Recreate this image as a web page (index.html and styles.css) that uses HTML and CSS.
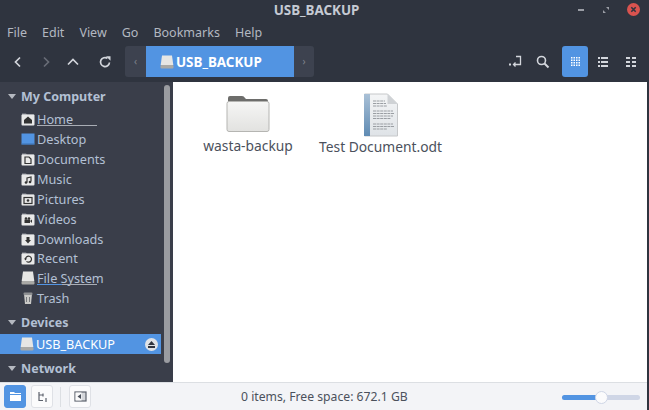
FILE: index.html
```html
<!DOCTYPE html>
<html>
    <head>
        <title>USB_BACKUP</title>
        <link rel="stylesheet" href="styles.css">
    </head>

    <body>
        <svg class="defs" width="0" height="0">
            <defs>
                <linearGradient id="folderFill" x1="0" y1="0" x2="0" y2="1">
                    <stop offset="0" stop-color="#f6f6f5"/>
                    <stop offset="1" stop-color="#e2e2e0"/>
                </linearGradient>
                <linearGradient id="spineFill" x1="0" y1="0" x2="0" y2="1">
                    <stop offset="0" stop-color="#a9c0d6"/>
                    <stop offset="1" stop-color="#5f8bb3"/>
                </linearGradient>
                <linearGradient id="pageFill" x1="0" y1="0" x2="0" y2="1">
                    <stop offset="0" stop-color="#f4f5f6"/>
                    <stop offset="1" stop-color="#dfe3e7"/>
                </linearGradient>
            </defs>
            <symbol id="place" viewBox="0 0 14 14">
                <path d="M1 3V1.500h4l1 1h7V4H1z" fill="#8f929a"/>
                <rect x=".5" y="2.500" width="13" height="11" rx="1" fill="#e9e9e9"/>
            </symbol>
            <symbol id="drive" viewBox="0 0 14 14">
                <path d="M2 .5h10l1.300 9.500H.7z" fill="#e6e6e4"/>
                <rect x=".5" y="10" width="13" height="3.500" rx="1" fill="#a9a9a6"/>
            </symbol>
        </svg>

        <!-- title bar -->
        <header class="titlebar">
            <span class="title">USB_BACKUP</span>
            <div class="winbtns">
                <svg width="8" height="8" viewBox="0 0 8 8"><rect x="1" y="3" width="6" height="2" fill="#9a9da5"/></svg>
                <svg width="8" height="8" viewBox="0 0 8 8"><path d="M4 1h3v3zM4 7H1V4z" fill="#9a9da5"/></svg>
                <svg width="13" height="13" viewBox="0 0 13 13"><circle cx="6.500" cy="6.500" r="6.500" fill="#d9534f"/><path d="M4.300 4.300l4.400 4.400M8.700 4.300l-4.400 4.400" stroke="#2f343f" stroke-width="1.600"/></svg>
            </div>
        </header>

        <nav class="menubar">
            <span>File</span>
            <span>Edit</span>
            <span>View</span>
            <span>Go</span>
            <span>Bookmarks</span>
            <span>Help</span>
        </nav>

        <!-- toolbar -->
        <div class="toolbar">
            <div class="navbtns">
                <svg width="12" height="12" viewBox="0 0 12 12"><path d="M8 1.500L3.500 6 8 10.500" fill="none" stroke="#d3d6dc" stroke-width="1.700"/></svg>
                <svg width="12" height="12" viewBox="0 0 12 12"><path d="M4 1.500L8.500 6 4 10.500" fill="none" stroke="#686c76" stroke-width="1.700"/></svg>
                <svg width="12" height="12" viewBox="0 0 12 12"><path d="M1 8.500L6 3.500l5 5" fill="none" stroke="#d3d6dc" stroke-width="1.700"/></svg>
                <svg class="reload" width="12" height="12" viewBox="0 0 12 12"><path d="M10.500 6.500A4.500 4.500 0 1 1 8.500 2.300" fill="none" stroke="#d3d6dc" stroke-width="1.700"/><path d="M7 .3h4.500v4.500z" fill="#d3d6dc"/></svg>
            </div>
            <div class="pathbar">
                <span class="patharrow">&#8249;</span>
                <div class="pathcrumb">
                    <svg class="crumbicon" width="14" height="14"><use href="#drive"/></svg>
                    <span>USB_BACKUP</span>
                </div>
                <span class="patharrow">&#8250;</span>
            </div>
            <div class="viewbtns">
                <span class="viewbtn">
                    <svg width="14" height="14" viewBox="0 0 14 14"><path d="M8 1.500h4.500V9.500H6M7.500 7.500l-2 2 2 2" fill="none" stroke="#d3d6dc" stroke-width="1.300"/><rect x="1" y="8.500" width="2" height="2" fill="#d3d6dc"/></svg>
                </span>
                <span class="viewbtn search">
                    <svg width="14" height="14" viewBox="0 0 14 14"><circle cx="5.500" cy="5.500" r="4" fill="none" stroke="#d3d6dc" stroke-width="1.600"/><path d="M8.500 8.500l4 4" stroke="#d3d6dc" stroke-width="2"/></svg>
                </span>
                <span class="viewbtn active">
                    <svg width="9" height="9" viewBox="0 0 9 9" fill="none" stroke="#fff" stroke-width="1.500" stroke-dasharray="1.500 1"><path d="M0 .75h9M0 3.250h9M0 5.750h9M0 8.250h9"/></svg>
                </span>
                <span class="viewbtn">
                    <svg width="10" height="10" viewBox="0 0 10 10" fill="#d3d6dc"><rect x="0" y="0" width="2" height="2"/><rect x="3" y="0" width="7" height="2"/><rect x="0" y="4" width="2" height="2"/><rect x="3" y="4" width="7" height="2"/><rect x="0" y="8" width="2" height="2"/><rect x="3" y="8" width="7" height="2"/></svg>
                </span>
                <span class="viewbtn">
                    <svg width="10" height="10" viewBox="0 0 10 10" fill="#d3d6dc"><rect x="0" y="0" width="4" height="2"/><rect x="6" y="0" width="4" height="2"/><rect x="0" y="4" width="4" height="2"/><rect x="6" y="4" width="4" height="2"/><rect x="0" y="8" width="4" height="2"/><rect x="6" y="8" width="4" height="2"/></svg>
                </span>
            </div>
        </div>

        <div class="content">
            <!-- sidebar -->
            <aside class="sidebar">
                <div class="sidehead first"><i class="tri"></i>My Computer</div>
                <div class="siderow"><svg class="sideicon" width="14" height="14"><use href="#place"/><path d="M3 11.500V8l4-3.500L11 8v3.500z" fill="#333"/></svg><span class="usage">Home</span></div>
                <div class="siderow"><svg class="sideicon" width="14" height="14"><rect x=".5" y="1.500" width="13" height="11" fill="#5294e2"/><rect x=".5" y="11.500" width="13" height="1" fill="#3a70b0"/></svg><span>Desktop</span></div>
                <div class="siderow"><svg class="sideicon" width="14" height="14"><use href="#place"/><path d="M4 5h4l2 2v4.500H4z" fill="none" stroke="#333" stroke-width="1.200"/></svg><span>Documents</span></div>
                <div class="siderow"><svg class="sideicon" width="14" height="14"><use href="#place"/><path d="M6 10.500V6l4-1v4.500" fill="none" stroke="#333" stroke-width="1.200"/><circle cx="5" cy="10.500" r="1.300" fill="#333"/><circle cx="9" cy="10" r="1.300" fill="#333"/></svg><span>Music</span></div>
                <div class="siderow"><svg class="sideicon" width="14" height="14"><use href="#place"/><rect x="3" y="5.500" width="8" height="6" fill="none" stroke="#333" stroke-width="1.200"/><circle cx="7" cy="8.500" r="1.300" fill="#333"/></svg><span>Pictures</span></div>
                <div class="siderow"><svg class="sideicon" width="14" height="14"><use href="#place"/><rect x="3.500" y="7.500" width="5.500" height="3.500" fill="#333"/><circle cx="5" cy="6.500" r="1.300" fill="#333"/><circle cx="8" cy="6.500" r="1.300" fill="#333"/><path d="M9 9l2-1.500V11z" fill="#333"/></svg><span>Videos</span></div>
                <div class="siderow"><svg class="sideicon" width="14" height="14"><use href="#place"/><path d="M5.500 5h3v3H10l-3 3.500L4 8h1.500z" fill="#333"/></svg><span>Downloads</span></div>
                <div class="siderow tight"><svg class="sideicon" width="14" height="14"><use href="#place"/><path d="M4.500 8a3 3 0 1 1 1 2.400" fill="none" stroke="#333" stroke-width="1.200"/><path d="M3 7.500h3L4.500 9.500z" fill="#333"/></svg><span>Recent</span></div>
                <div class="siderow"><svg class="sideicon" width="14" height="14"><use href="#drive"/></svg><span class="usage used">File System</span></div>
                <div class="siderow"><svg class="sideicon" width="14" height="14"><path d="M3 3h8l-1 10H4z" fill="#c9c9c7"/><rect x="2.500" y="1.500" width="9" height="2.500" rx="1" fill="#8d8f92"/><path d="M5.500 6v5M8.500 6v5" stroke="#77797d"/></svg><span>Trash</span></div>
                <div class="sidehead devices"><i class="tri"></i>Devices</div>
                <div class="siderow selected"><svg class="sideicon" width="14" height="14"><use href="#drive"/></svg><span>USB_BACKUP</span>
                    <svg class="eject" width="13" height="13" viewBox="0 0 13 13"><circle cx="6.500" cy="6.500" r="6.500" fill="#dfe2e6"/><path d="M6.500 3l3.500 4H3z" fill="#2f343f"/><rect x="3" y="8" width="7" height="2" fill="#2f343f"/></svg>
                </div>
                <div class="sidehead network"><i class="tri"></i>Network</div>
                <div class="scrollthumb"></div>
            </aside>

            <!-- file view -->
            <main class="files">
                <div class="fileitem folder">
                    <svg width="44" height="38" viewBox="0 0 44 38">
                        <path d="M2 8V3q0-2 2-2h12q2 0 3 2l1 1h20q2 0 2 2v4H2z" fill="#6d6d6b"/>
                        <rect x="1" y="6.500" width="42" height="30" rx="2" fill="url(#folderFill)" stroke="#b5b5b2"/>
                    </svg>
                    <span>wasta-backup</span>
                </div>
                <div class="fileitem document">
                    <svg width="36" height="44" viewBox="0 0 36 44">
                        <path d="M1.500 1h23l10 10v32h-33z" fill="url(#pageFill)" stroke="#c6c8ca"/>
                        <rect x="1" y="1" width="6" height="42" fill="url(#spineFill)"/>
                        <path d="M24.500 1v10h10z" fill="#cfd2d5"/>
                        <path d="M10 8h12M10 10.500h13M10 13h14M10 18h20M10 20.500h21M10 23h20M10 25.500h18M10 31h20M10 33.500h21M10 36h14" stroke="#9a9ea3" stroke-dasharray="3 .6"/>
                    </svg>
                    <span>Test Document.odt</span>
                </div>
            </main>
        </div>

        <!-- status bar -->
        <footer class="statusbar">
            <div class="statusbtns">
                <span class="statusbtn on">
                    <svg width="13" height="11" viewBox="0 0 13 11"><path d="M1 1h4l1 1h6v8H1z" fill="#fff"/><rect x="1" y="3" width="11" height="1" fill="#5294e2"/></svg>
                </span>
                <span class="statusbtn">
                    <svg width="10" height="10" viewBox="0 0 10 10"><path d="M2 0v9M2 3h4M2 8.500h4M6 1.500v3M9 6v4" fill="none" stroke="#5c616c" stroke-width="1.200"/></svg>
                </span>
                <i class="statussep"></i>
                <span class="statusbtn">
                    <svg width="13" height="11" viewBox="0 0 13 11"><rect x="1" y="1" width="11" height="9" fill="#d5d7db" stroke="#5c616c" stroke-width="1.200"/><rect x="1.500" y="1.500" width="6" height="8" fill="#fbfbfc"/><path d="M7 3v5L3.500 5.500z" fill="#4b515c"/></svg>
                </span>
            </div>
            <span class="statustext">0 items, Free space: 672.1 GB</span>
            <div class="zoomslider"><i class="zoomfill"></i><i class="zoomknob"></i></div>
        </footer>
    </body>
</html>
```

FILE: styles.css
```css
html, body {
    margin: 0;
    padding: 0;
}

body {
    width: 649px;
    height: 410px;
    overflow: hidden;
    display: flex;
    flex-direction: column;
    background-color: #2f343f;
    font-family: "Noto Sans", sans-serif;
    font-size: 12px;
}

.defs {
    position: absolute;
}

/* Style the title bar */
.titlebar {
    height: 20px;
    flex: none;
    display: flex;
    align-items: center;
    justify-content: center;
    position: relative;
    color: #c5cad3;
    font-weight: bold;
    font-size: 13.400px;
}

.title {
    margin-left: -16px;
}

.winbtns {
    position: absolute;
    right: 9px;
    top: 3px;
    display: flex;
    align-items: center;
    gap: 17px;
}

/* Style the menu bar */
.menubar {
    height: 24px;
    flex: none;
    display: flex;
    align-items: center;
    gap: 15px;
    padding-left: 7px;
    color: #b3b8c1;
    font-size: 12.500px;
}

/* Style the toolbar */
.toolbar {
    height: 38px;
    flex: none;
    display: flex;
    align-items: flex-start;
    padding-top: 2px;
    box-sizing: border-box;
}

.navbtns {
    width: 125px;
    height: 31px;
    display: flex;
    align-items: center;
    gap: 15.500px;
    padding-left: 12px;
    box-sizing: border-box;
}

.reload {
    margin-left: 4px;
}

.pathbar {
    width: 189px;
    height: 31px;
    display: flex;
    background-color: #3d424f;
    border-radius: 3px;
    overflow: hidden;
}

.patharrow {
    width: 20px;
    color: #7f838d;
    text-align: center;
    line-height: 30px;
    font-size: 10px;
}

.patharrow:first-child {
    width: 21px;
}

.pathcrumb {
    flex: 1;
    display: flex;
    align-items: center;
    gap: 2px;
    padding-left: 14px;
    background-color: #5294e2;
    color: #fff;
    font-size: 13.400px;
    font-weight: bold;
}

.viewbtns {
    margin-left: auto;
    margin-right: 4px;
    display: flex;
}

.viewbtn {
    width: 28px;
    height: 31px;
    display: flex;
    align-items: center;
    justify-content: center;
}

.viewbtn.search {
    margin-right: 4px;
}

.viewbtn.active {
    width: 26px;
    margin: 0 1px;
    background-color: #5294e2;
    border-radius: 3px;
}

.content {
    flex: 1;
    min-height: 0;
    display: flex;
}

/* Style the sidebar */
.sidebar {
    width: 173px;
    flex: none;
    position: relative;
    overflow: hidden;
    background-color: #3a3e4a;
    color: #b3c0d4;
    font-size: 12.700px;
}

.sidehead {
    display: flex;
    align-items: center;
    box-sizing: border-box;
    padding-left: 8px;
    font-size: 12.500px;
    font-weight: bold;
}

.sidehead.first {
    height: 27px;
    padding-top: 2px;
}

.sidehead.devices {
    height: 26px;
    padding-top: 2px;
}

.sidehead.network {
    height: 28px;
}

.tri {
    width: 0;
    height: 0;
    margin-right: 5px;
    border-left: 4px solid transparent;
    border-right: 4px solid transparent;
    border-top: 5px solid #b5b9c0;
}

.siderow {
    width: 161px;
    height: 20px;
    display: flex;
    align-items: center;
    padding-left: 21px;
    box-sizing: border-box;
    position: relative;
}

.siderow.tight {
    margin-top: -1px;
}

.sideicon {
    flex: none;
    margin-right: 2px;
}

.crumbicon {
    flex: none;
}

.siderow.selected {
    background-color: #5294e2;
    color: #fff;
    padding-left: 20px;
}

.eject {
    position: absolute;
    right: 3px;
    top: 4px;
}

/* Disk usage line under a place name */
.usage::after {
    content: "";
    position: absolute;
    left: 37px;
    bottom: 3px;
    width: 60px;
    height: 1px;
    background-color: #a9adb5;
}

.used::before {
    content: "";
    position: absolute;
    left: 37px;
    bottom: 3px;
    z-index: 1;
    width: 25px;
    height: 1px;
    background-color: #5294e2;
}

.scrollthumb {
    position: absolute;
    left: 164px;
    top: 3px;
    bottom: 19px;
    width: 6px;
    border-radius: 3px;
    background-color: #9a9ca1;
}

/* Style the file view */
.files {
    flex: 1;
    display: flex;
    align-items: flex-start;
    background-color: #fff;
    color: #4b515c;
    font-size: 13.800px;
    margin-right: 2px;
}

.fileitem {
    display: flex;
    flex-direction: column;
    align-items: center;
}

.fileitem span {
    white-space: nowrap;
}

.folder {
    width: 150px;
    margin-top: 13px;
    gap: 3px;
}

.document {
    width: 115px;
    margin-top: 11px;
}

/* Style the status bar */
.statusbar {
    height: 28px;
    flex: none;
    display: flex;
    align-items: center;
    position: relative;
    box-sizing: border-box;
    border-top: 1px solid #dcdfe3;
    background-color: #f3f4f7;
    color: #4b515c;
    margin-right: 2px;
}

.statusbtns {
    display: flex;
    align-items: center;
    gap: 5px;
    padding-left: 4px;
}

.statusbtn {
    width: 22px;
    height: 23px;
    display: flex;
    align-items: center;
    justify-content: center;
    box-sizing: border-box;
    background-color: #fbfbfc;
    border: 1px solid #dfe1e6;
    border-radius: 3px;
}

.statusbtn.on {
    background-color: #5294e2;
    border-color: #5294e2;
}

.statussep {
    width: 1px;
    height: 20px;
    margin: 0 3px 0 2px;
    background-color: #dcdfe3;
}

.statustext {
    position: absolute;
    left: 241px;
    font-size: 12.200px;
}

.zoomslider {
    position: absolute;
    left: 562px;
    top: 12px;
    width: 78px;
    height: 5px;
    border-radius: 3px;
    background-color: #cfd6e6;
}

.zoomfill {
    position: absolute;
    left: 0;
    top: 0;
    width: 36px;
    height: 5px;
    border-radius: 3px 0 0 3px;
    background-color: #5294e2;
}

.zoomknob {
    position: absolute;
    left: 33px;
    top: -4px;
    width: 13px;
    height: 13px;
    box-sizing: border-box;
    border: 1px solid #cfd6e6;
    border-radius: 50%;
    background-color: #fbfbfc;
}
```
